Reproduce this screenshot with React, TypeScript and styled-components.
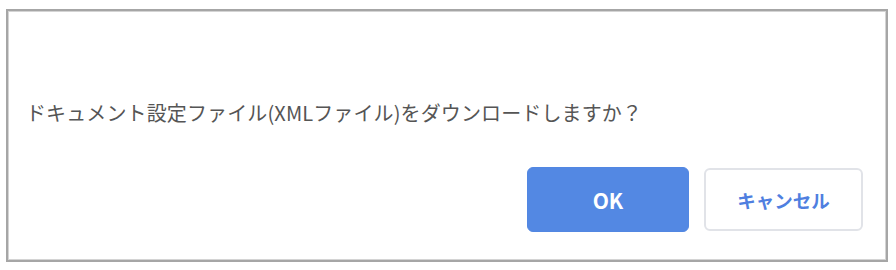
import React from "react";
import styled, { createGlobalStyle } from "styled-components";

const Global = createGlobalStyle`
  html, body { margin: 0; padding: 0; background: #ffffff; }
  body { font-family: "Noto Sans CJK JP", "Noto Sans", sans-serif; }
`;

const Page = styled.div`
  padding: 9px 8px 8px 6px;
  width: 896px;
  height: 270px;
  box-sizing: border-box;
`;

const Frame = styled.div`
  height: 100%;
  box-sizing: border-box;
  border: 2px solid #a6a6a6;
  box-shadow: inset 1px 1px 0 #d4d4d4, inset -1px -1px 0 #d4d4d4;
  background: #ffffff;
  display: flex;
  flex-direction: column;
  padding: 88px 23px 0 18px;
`;

const Message = styled.p`
  margin: 0;
  font-size: 20px;
  line-height: 28px;
  color: #555555;
  letter-spacing: 0.12px;
  white-space: nowrap;
`;

const Actions = styled.div`
  display: flex;
  justify-content: flex-end;
  align-items: center;
  gap: 15px;
  margin-top: 40px;
`;

const Button = styled.button<{ $primary?: boolean; $w: number }>`
  width: ${(p) => p.$w}px;
  height: ${(p) => (p.$primary ? 65 : 63)}px;
  border-radius: 6px;
  font-family: "Noto Sans CJK JP", "Noto Sans", sans-serif;
  font-size: ${(p) => (p.$primary ? 21 : 18.5)}px;
  font-weight: 700;
  cursor: pointer;
  display: flex;
  align-items: center;
  justify-content: center;
  box-sizing: border-box;
  border: ${(p) => (p.$primary ? "1px solid #5287e2" : "2px solid #e1e3e8")};
  background: ${(p) => (p.$primary ? "#5388e3" : "#ffffff")};
  color: ${(p) => (p.$primary ? "#ffffff" : "#4f7fe0")};
`;

export default function App() {
  return (
    <>
      <Global />
      <Page>
        <Frame>
          <Message>ドキュメント設定ファイル(XMLファイル)をダウンロードしますか？</Message>
          <Actions>
            <Button $primary $w={162}>OK</Button>
            <Button $w={159}>キャンセル</Button>
          </Actions>
        </Frame>
      </Page>
    </>
  );
}
